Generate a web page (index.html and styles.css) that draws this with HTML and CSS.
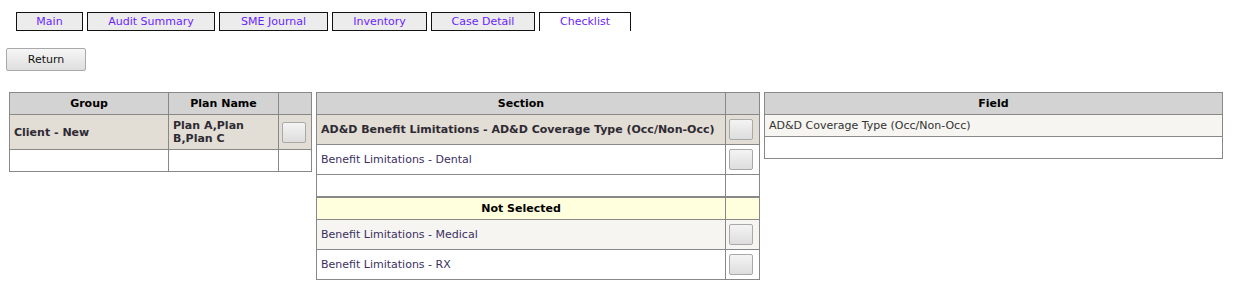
FILE: index.html
```html
<!DOCTYPE html>
<html>
<head>
<meta charset="utf-8">
<link rel="stylesheet" href="styles.css">
</head>
<body>
<div class="tabs">
  <a class="tab w-main">Main</a>
  <a class="tab w-audit">Audit Summary</a>
  <a class="tab w-sme">SME Journal</a>
  <a class="tab w-inv">Inventory</a>
  <a class="tab w-case">Case Detail</a>
  <a class="tab tab-active w-check">Checklist</a>
</div>
<div class="actions">
  <button class="btn-return">Return</button>
</div>
<div class="panels">
  <table class="grid grid-group">
    <colgroup><col class="c-group"><col class="c-plan"><col class="c-btn"></colgroup>
    <tr class="head"><th>Group</th><th>Plan Name</th><th></th></tr>
    <tr class="sel tall"><td>Client - New</td><td>Plan A,Plan B,Plan C</td><td class="bc"><span class="pick"></span></td></tr>
    <tr class="empty"><td></td><td></td><td></td></tr>
  </table>
  <table class="grid grid-section">
    <colgroup><col class="c-section"><col class="c-btn2"></colgroup>
    <tr class="head"><th>Section</th><th></th></tr>
    <tr class="sel row30"><td>AD&amp;D Benefit Limitations - AD&amp;D Coverage Type (Occ/Non-Occ)</td><td class="bc"><span class="pick"></span></td></tr>
    <tr class="plain row30"><td>Benefit Limitations - Dental</td><td class="bc"><span class="pick"></span></td></tr>
    <tr class="empty"><td></td><td></td></tr>
    <tr class="notsel"><th>Not Selected</th><th></th></tr>
    <tr class="alt row30"><td>Benefit Limitations - Medical</td><td class="bc"><span class="pick"></span></td></tr>
    <tr class="plain row30"><td>Benefit Limitations - RX</td><td class="bc"><span class="pick"></span></td></tr>
  </table>
  <table class="grid grid-field">
    <tr class="head"><th>Field</th></tr>
    <tr class="alt"><td>AD&amp;D Coverage Type (Occ/Non-Occ)</td></tr>
    <tr class="empty"><td></td></tr>
  </table>
</div>
</body>
</html>
```
FILE: styles.css
```css
html, body {
  margin: 0;
  padding: 0;
  background: #ffffff;
  font-family: "DejaVu Sans", Verdana, sans-serif;
}
body {
  overflow: hidden;
}
.tabs {
  display: flex;
  gap: 4px;
  padding: 12px 0 0 16px;
  height: 19px;
}
.tab {
  box-sizing: border-box;
  height: 19px;
  border: 1px solid #111;
  background: #ececec;
  color: #6a1eff;
  font-size: 11px;
  line-height: 17px;
  text-align: center;
  cursor: pointer;
}
.tab-active {
  background: #ffffff;
  border-bottom: none;
}
.w-main { width: 67px; }
.w-audit { width: 128px; }
.w-sme { width: 109px; }
.w-inv { width: 95px; }
.w-case { width: 104px; }
.w-check { width: 92px; }

.actions {
  padding: 17px 0 0 6px;
  height: 23px;
}
.btn-return {
  box-sizing: border-box;
  width: 80px;
  height: 23px;
  border: 1px solid #a9a9a9;
  border-radius: 2px;
  background: linear-gradient(#f6f6f6, #dedede);
  font-family: "DejaVu Sans", Verdana, sans-serif;
  font-size: 11px;
  color: #111;
  padding: 0;
}

.panels {
  display: flex;
  align-items: flex-start;
  padding: 21px 0 0 9px;
  gap: 4px;
}
.grid {
  border-collapse: collapse;
  table-layout: fixed;
  font-size: 11px;
}
.grid td, .grid th {
  border: 1px solid #888888;
  padding: 0 4px;
  overflow: hidden;
}
.grid-group { width: 303px; }
.grid-section { width: 444px; }
.grid-field { width: 459px; }
.c-group { width: 159px; }
.c-plan { width: 110px; }
.c-btn { width: 33px; }
.c-section { width: 409px; }
.c-btn2 { width: 34px; }

.head th {
  background: #d3d3d3;
  color: #000;
  font-weight: bold;
  height: 21px;
  text-align: center;
}
.sel td {
  background: #e2ddd5;
  color: #2e2a33;
  font-weight: bold;
  text-align: left;
}
.tall td { height: 34px; line-height: 13px; }
.row30 td { height: 29px; }
.plain td {
  background: #ffffff;
  color: #3b2f63;
  font-size: 11px;
}
.alt td {
  background: #f6f5f1;
  color: #3b2f63;
  font-size: 11px;
}
.grid-field .alt td { height: 21px; color: #333; }
.empty td { height: 21px; background: #fff; }
.notsel th {
  background: #ffffdd;
  color: #000;
  font-weight: bold;
  height: 21px;
  text-align: center;
  border-top: 2px solid #888888;
}
.grid td.bc { padding: 0 0 0 3px; }
.pick {
  display: block;
  box-sizing: border-box;
  width: 24px;
  height: 21px;
  border: 1px solid #a9a9a9;
  border-radius: 2px;
  background: linear-gradient(#f4f4f4, #dddddd);
}
```
